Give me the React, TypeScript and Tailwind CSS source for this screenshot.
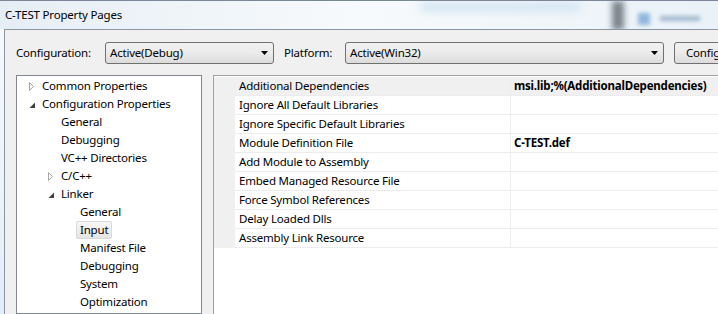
import React from "react";

type TreeItem = { label: string; level: 0 | 1 | 2; expander?: "open" | "closed"; selected?: boolean };

const tree: TreeItem[] = [
  { label: "Common Properties", level: 0, expander: "closed" },
  { label: "Configuration Properties", level: 0, expander: "open" },
  { label: "General", level: 1 },
  { label: "Debugging", level: 1 },
  { label: "VC++ Directories", level: 1 },
  { label: "C/C++", level: 1, expander: "closed" },
  { label: "Linker", level: 1, expander: "open" },
  { label: "General", level: 2 },
  { label: "Input", level: 2, selected: true },
  { label: "Manifest File", level: 2 },
  { label: "Debugging", level: 2 },
  { label: "System", level: 2 },
  { label: "Optimization", level: 2 },
];

const indent = ["pl-[12px]", "pl-[31px]", "pl-[50px]"];

const props: { name: string; value?: string; selected?: boolean }[] = [
  { name: "Additional Dependencies", value: "msi.lib;%(AdditionalDependencies)", selected: true },
  { name: "Ignore All Default Libraries" },
  { name: "Ignore Specific Default Libraries" },
  { name: "Module Definition File", value: "C-TEST.def" },
  { name: "Add Module to Assembly" },
  { name: "Embed Managed Resource File" },
  { name: "Force Symbol References" },
  { name: "Delay Loaded Dlls" },
  { name: "Assembly Link Resource" },
];

function Expander({ kind }: { kind?: "open" | "closed" }) {
  if (kind === "closed")
    return (
      <svg width="6" height="9" viewBox="0 0 6 9" className="block">
        <polygon points="0.5,0.5 4.5,4.5 0.5,8.5" fill="#ffffff" stroke="#a6a6a6" strokeWidth="1" />
      </svg>
    );
  if (kind === "open")
    return (
      <svg width="7" height="7" viewBox="0 0 7 7" className="block mt-[2px]">
        <polygon points="6,0.5 6,6 0.5,6" fill="#404040" />
      </svg>
    );
  return null;
}

function Dropdown({ text, widthClass }: { text: string; widthClass: string }) {
  return (
    <div
      className={`${widthClass} h-[22px] shrink-0 flex items-center justify-between rounded-[3px] border border-[#707070] bg-gradient-to-b from-[#f2f2f2] via-[#ebebeb] to-[#dcdcdc] pl-[4px] pr-[5px]`}
    >
      <span className="whitespace-nowrap">{text}</span>
      <svg width="7" height="4" viewBox="0 0 7 4" className="block">
        <polygon points="0,0 7,0 3.5,4" fill="#000" />
      </svg>
    </div>
  );
}

export default function App() {
  return (
    <div className="w-[718px] h-[314px] overflow-hidden flex flex-col bg-[#f0f0f0] font-['Noto_Sans',sans-serif] text-[11.5px] tracking-[-0.2px] leading-none text-black">
      {/* Title bar */}
      <div className="relative h-[29px] shrink-0 overflow-hidden border-t border-[#7b8794] bg-gradient-to-r from-[#e6eef5] via-[#f7fafc] to-[#eaf2f8]">
        <div className="absolute left-[420px] top-[2px] h-[8px] w-[160px] rounded-full bg-[#cfe3f2] blur-[4px]" />
        <div className="absolute left-[612px] top-0 h-[29px] w-[12px] bg-[#5d6670] blur-[3px] opacity-80" />
        <div className="absolute left-[638px] top-[12px] h-[12px] w-[12px] bg-[#8fb6de] blur-[2px]" />
        <div className="absolute left-[660px] top-[15px] h-[5px] w-[40px] bg-[#9fb6cc] blur-[2px]" />
        <div className="relative flex h-full items-center pl-[5px] pb-[1px]">C-TEST Property Pages</div>
      </div>

      <div className="flex flex-1 min-h-0">
        <div className="w-[4px] shrink-0 bg-gradient-to-b from-[#f6f9fc] via-[#eef4fa] to-[#e2ecf6]" />
        <div className="flex-1 min-w-0 flex flex-col border-l border-t border-[#8a96a3] bg-[#f0f0f0] pl-[11px] pt-[12px]">
          {/* Configuration row */}
          <div className="flex items-center h-[22px] shrink-0">
            <span className="w-[89px] shrink-0 whitespace-nowrap">Configuration:</span>
            <Dropdown text="Active(Debug)" widthClass="w-[169px]" />
            <span className="ml-[10px] w-[61px] shrink-0 whitespace-nowrap">Platform:</span>
            <Dropdown text="Active(Win32)" widthClass="w-[319px]" />
            <div className="ml-[10px] h-[22px] shrink-0 flex items-center rounded-[3px] border border-[#707070] bg-gradient-to-b from-[#f2f2f2] via-[#ebebeb] to-[#dcdcdc] px-[11px] whitespace-nowrap">
              Configuration Manager...
            </div>
          </div>

          {/* Panels */}
          <div className="flex flex-1 min-h-0 mt-[11px] gap-[11px]">
            {/* Tree */}
            <div className="w-[186px] shrink-0 border border-[#828790] bg-white pt-[1px] overflow-hidden">
              {tree.map((it, i) => (
                <div key={i} className={`flex items-center h-[18px] ${indent[it.level]}`}>
                  <div className="w-[9px] shrink-0 flex items-center">
                    <Expander kind={it.expander} />
                  </div>
                  <span
                    className={`h-[18px] flex items-center px-[3px] rounded-[2px] border whitespace-nowrap ${
                      it.selected
                        ? "border-[#d9d9d9] bg-gradient-to-b from-[#f8f8f8] to-[#e5e5e5]"
                        : "border-transparent"
                    }`}
                  >
                    {it.label}
                  </span>
                </div>
              ))}
            </div>

            {/* Property grid */}
            <div className="flex-1 min-w-0 border-l border-t border-[#a0a0a0] bg-white pt-[1px]">
              {props.map((p, i) => (
                <div key={i} className="flex h-[19px]">
                  <div className="w-[21px] shrink-0 bg-[#f0f0f0]" />
                  <div
                    className={`flex flex-1 min-w-0 border-b border-[#ececec] ${
                      p.selected ? "bg-[#f0f0f0]" : "bg-white"
                    }`}
                  >
                    <div className="w-[276px] shrink-0 border-r border-[#ececec] flex items-center pl-[4px] whitespace-nowrap">
                      {p.name}
                    </div>
                    <div className="flex-1 flex items-center pl-[3px] font-bold whitespace-nowrap">
                      {p.value ?? ""}
                    </div>
                  </div>
                </div>
              ))}
            </div>
          </div>
        </div>
      </div>
    </div>
  );
}
